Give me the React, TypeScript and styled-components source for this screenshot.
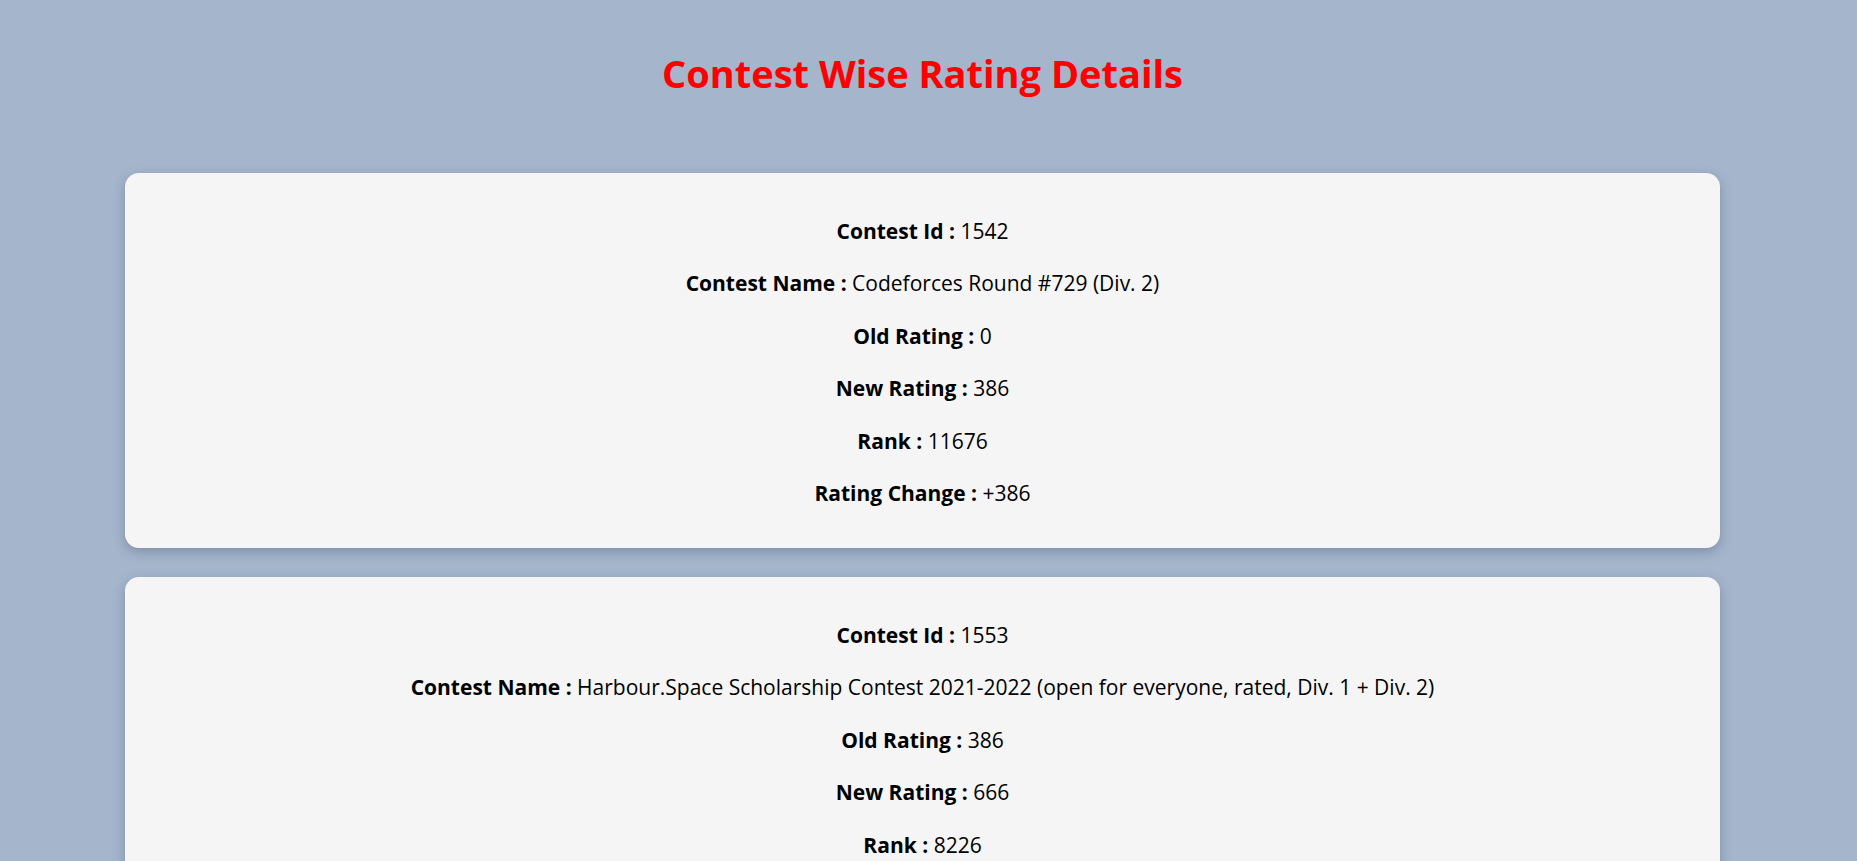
import React from "react";
import styled, { createGlobalStyle } from "styled-components";

const GlobalStyle = createGlobalStyle`
  html, body {
    margin: 0;
    padding: 0;
    background: #a4b5cc;
    font-family: "Open Sans", "Noto Sans", "Liberation Sans", sans-serif;
  }
`;

const Page = styled.div`
  padding: 49px 12px 40px 0;
  display: flex;
  flex-direction: column;
  align-items: center;
`;

const Title = styled.h1`
  margin: 0 0 76px;
  color: #ff0000;
  font-size: 38px;
  line-height: 48px;
  font-weight: 700;
  text-align: center;
`;

const List = styled.div`
  width: 1595px;
  display: flex;
  flex-direction: column;
  gap: 29px;
`;

const Card = styled.div`
  background: #f5f5f5;
  border-radius: 14px;
  box-shadow: 0 4px 12px rgba(60, 75, 100, 0.35);
  padding: 45px 0 42px;
  display: flex;
  flex-direction: column;
  align-items: center;
  gap: 26.4px;
`;

const Row = styled.p`
  margin: 0;
  font-size: 21px;
  line-height: 26px;
  color: #000;
  text-align: center;
`;

const Label = styled.b`
  font-weight: 700;
`;

type Contest = {
  id: number;
  name: string;
  oldRating: number;
  newRating: number;
  rank: number;
};

const contests: Contest[] = [
  { id: 1542, name: "Codeforces Round #729 (Div. 2)", oldRating: 0, newRating: 386, rank: 11676 },
  {
    id: 1553,
    name: "Harbour.Space Scholarship Contest 2021-2022 (open for everyone, rated, Div. 1 + Div. 2)",
    oldRating: 386,
    newRating: 666,
    rank: 8226,
  },
  { id: 1555, name: "Educational Codeforces Round 112 (Rated for Div. 2)", oldRating: 666, newRating: 843, rank: 6912 },
];

const fmtChange = (n: number) => (n >= 0 ? `+${n}` : `${n}`);

export default function App() {
  return (
    <>
      <GlobalStyle />
      <Page>
        <Title>Contest Wise Rating Details</Title>
        <List>
          {contests.map((c) => (
            <Card key={c.id}>
              <Row>
                <Label>Contest Id :</Label> {c.id}
              </Row>
              <Row>
                <Label>Contest Name :</Label> {c.name}
              </Row>
              <Row>
                <Label>Old Rating :</Label> {c.oldRating}
              </Row>
              <Row>
                <Label>New Rating :</Label> {c.newRating}
              </Row>
              <Row>
                <Label>Rank :</Label> {c.rank}
              </Row>
              <Row>
                <Label>Rating Change :</Label> {fmtChange(c.newRating - c.oldRating)}
              </Row>
            </Card>
          ))}
        </List>
      </Page>
    </>
  );
}
